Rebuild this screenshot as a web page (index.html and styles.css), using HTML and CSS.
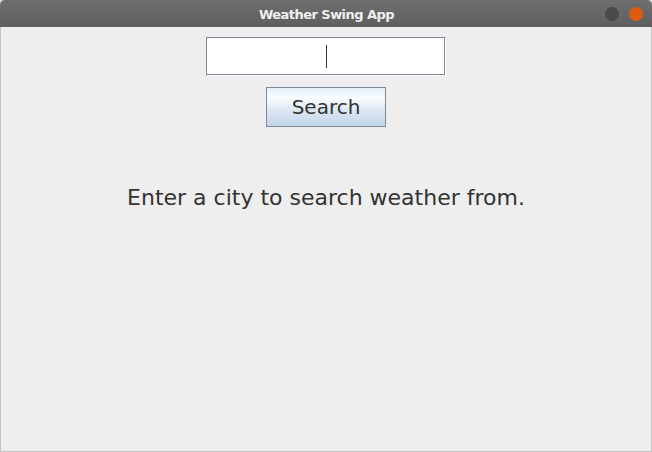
FILE: index.html
```html
<!DOCTYPE html>
<html>
<head>
<meta charset="utf-8">
<link rel="stylesheet" href="styles.css">
</head>
<body>
<div class="window">
  <div class="titlebar">
    <span class="title">Weather Swing App</span>
    <div class="controls">
      <span class="dot dot-min"></span>
      <span class="dot dot-close"></span>
    </div>
  </div>
  <div class="content">
    <div class="field"><span class="caret"></span></div>
    <button class="btn">Search</button>
    <div class="message">Enter a city to search weather from.</div>
  </div>
</div>
</body>
</html>
```
FILE: styles.css
```css
html, body {
  margin: 0;
  padding: 0;
  width: 652px;
  height: 452px;
  background: #d6d6d6;
  overflow: hidden;
}
.window {
  width: 652px;
  height: 452px;
  box-sizing: border-box;
  display: flex;
  flex-direction: column;
  background: #eeeeee;
  border-radius: 5px 5px 0 0;
  overflow: hidden;
}
.titlebar {
  height: 27px;
  flex: 0 0 27px;
  background: linear-gradient(#6e6e6e, #5f5f5f);
  display: flex;
  align-items: center;
  justify-content: center;
  position: relative;
}
.title {
  font-family: "DejaVu Sans", sans-serif;
  font-weight: bold;
  font-size: 13px;
  color: #f0f0f0;
  letter-spacing: -0.55px;
  margin-top: 1px;
  margin-left: 1px;
}
.controls {
  position: absolute;
  right: 9px;
  top: 7px;
  display: flex;
  gap: 10px;
}
.dot {
  width: 14px;
  height: 14px;
  border-radius: 50%;
}
.dot-min { background: #4a4a4a; }
.dot-close { background: #e05a10; }
.content {
  flex: 1;
  display: flex;
  flex-direction: column;
  align-items: center;
  border-left: 1px solid #c4c4c4;
  border-right: 1px solid #c4c4c4;
  border-bottom: 1px solid #c4c4c4;
  padding-top: 10px;
}
.field {
  width: 240px;
  height: 39px;
  box-sizing: border-box;
  background: #ffffff;
  border-top: 1px solid #7a8a99;
  border-left: 1px solid #7a8a99;
  border-right: 1px solid #ffffff;
  border-bottom: 1px solid #ffffff;
  box-shadow: inset -1px -1px 0 #7a8a99;
  display: flex;
  justify-content: center;
  align-items: center;
}
.caret {
  width: 1px;
  height: 23px;
  background: #333333;
  margin-left: 0;
  margin-bottom: 1px;
}
.btn {
  margin-top: 11px;
  width: 120px;
  height: 40px;
  box-sizing: border-box;
  border: 1px solid #7a8a99;
  border-radius: 0;
  background: linear-gradient(#e4edf6 0%, #fbfdff 25%, #dbe6f2 60%, #c4d6e9 100%);
  font-family: "DejaVu Sans", sans-serif;
  font-size: 20px;
  color: #333333;
  padding: 0;
  padding-bottom: 1px;
}
.message {
  margin-top: 58px;
  font-family: "DejaVu Sans", sans-serif;
  font-size: 22px;
  color: #333333;
}
```
